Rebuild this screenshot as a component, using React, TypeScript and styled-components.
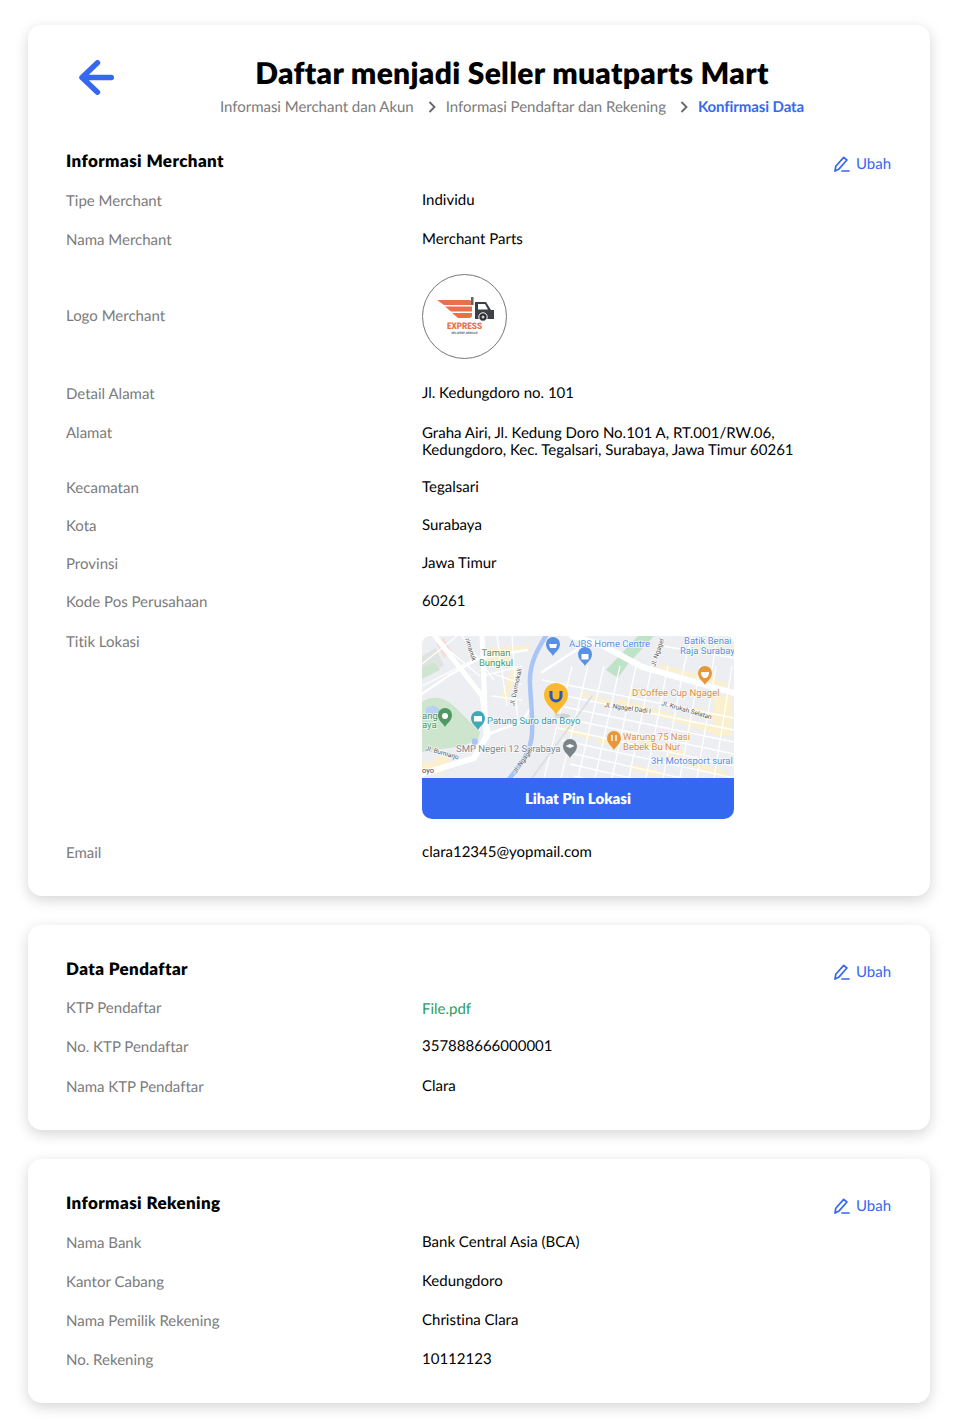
import styled, { createGlobalStyle } from 'styled-components';

const blue = '#3468f0';

const GlobalStyle = createGlobalStyle`
  html, body {
    margin: 0;
    background: #ffffff;
    font-family: "Lato", "Open Sans", sans-serif;
    color: #000000;
    text-rendering: geometricPrecision;
    font-variant-ligatures: none;
  }
`;

const Page = styled.div`
  width: 954px;
  height: 1420px;
  box-sizing: border-box;
  padding: 25px 24px 0 28px;
  display: flex;
  flex-direction: column;
  gap: 29px;
  overflow: hidden;
`;

const Card = styled.section<{ $h: number; $pt: number }>`
  height: ${(p) => p.$h}px;
  box-sizing: border-box;
  padding-top: ${(p) => p.$pt}px;
  background: #fff;
  border-radius: 14px;
  box-shadow: 0 4px 14px rgba(0, 0, 0, 0.17);
`;

const Header = styled.header`
  display: flex;
  padding: 0 20px 0 51px;
  height: 94px;
`;

const BackButton = styled.button`
  width: 35px;
  height: 35px;
  margin-top: 5px;
  padding: 0;
  border: 0;
  background: none;
  flex: none;
`;

const HeaderText = styled.div`
  flex: 1;
  text-align: center;
`;

const Title = styled.h1`
  margin: 0;
  font-size: 30px;
  line-height: 36px;
  font-weight: 800;
  letter-spacing: 0.3px;
`;

const Steps = styled.div`
  margin-top: 6px;
  display: flex;
  justify-content: center;
  align-items: center;
  height: 20px;
  font-size: 15px;
  color: #7b7b7b;
`;

const Step = styled.span<{ $active?: boolean }>`
  color: ${(p) => (p.$active ? blue : '#7b7b7b')};
  font-weight: ${(p) => (p.$active ? 700 : 400)};
  letter-spacing: ${(p) => (p.$active ? '-0.1px' : '-0.02px')};
`;

const StepArrow = styled.svg`
  width: 8px;
  height: 12px;
  margin: 0 10px 0 14px;
`;

const Section = styled.div`
  padding: 0 39px 0 38px;
`;

const SectionHead = styled.div`
  display: flex;
  justify-content: space-between;
  height: 24px;
`;

const SectionTitle = styled.h2`
  margin: 0;
  font-size: 17px;
  line-height: 24px;
  font-weight: 800;
  letter-spacing: 0.4px;
`;

const EditLink = styled.a`
  display: flex;
  align-items: center;
  gap: 6px;
  height: 20px;
  margin-top: 5px;
  color: ${blue};
  font-size: 15px;
`;

const Row = styled.div<{ $mt: number }>`
  display: grid;
  grid-template-columns: 356px 1fr;
  margin-top: ${(p) => p.$mt}px;
  font-size: 15px;
  line-height: 14px;
`;

const Label = styled.div<{ $center?: boolean }>`
  color: #7b7b7b;
  padding-top: 1px;
  padding-bottom: ${(p) => (p.$center ? '2px' : '0')};
  align-self: ${(p) => (p.$center ? 'center' : 'start')};
`;

const Value = styled.div<{ $link?: boolean; $multi?: boolean }>`
  color: ${(p) => (p.$link ? '#2f9a5c' : '#000')};
  padding-top: ${(p) => (p.$link ? '2px' : '0')};
  line-height: ${(p) => (p.$multi ? '17px' : '14px')};
`;

const LogoCircle = styled.div`
  width: 85px;
  height: 85px;
  box-sizing: border-box;
  border: 1px solid #777;
  border-radius: 50%;
  overflow: hidden;
`;

const MapBox = styled.div`
  width: 312px;
  height: 183px;
  margin-top: 2px;
  border-radius: 8px 8px 10px 10px;
  overflow: hidden;
  display: flex;
  flex-direction: column;
`;

const MapButton = styled.button`
  height: 41px;
  flex: none;
  border: 0;
  background: ${blue};
  color: #fff;
  font-family: inherit;
  font-size: 15px;
  font-weight: 800;
  text-rendering: inherit;
  font-variant-ligatures: inherit;
`;

const BackArrow = () => (
  <svg width="35" height="35" viewBox="0 0 35 35" fill="none" stroke={blue} strokeWidth="5.4" strokeLinecap="round" strokeLinejoin="round">
    <path d="M32.300 17.500H3M18.500 2.800L3 17.500 18.500 32.200" />
  </svg>
);

const PencilIcon = () => (
  <svg width="16" height="16" viewBox="0 0 16 16" fill="none" stroke={blue} strokeWidth="1.7" strokeLinecap="round" strokeLinejoin="round">
    <path d="M1 15l.8-4.800L9.700 1.400l3.200 2.600-7.800 8.900L1 15zM8 15h7" />
  </svg>
);

const Chevron = () => (
  <StepArrow viewBox="0 0 8 12" fill="none" stroke="#666" strokeWidth="1.8">
    <path d="M1.500 1L6.500 6l-5 5" />
  </StepArrow>
);

const Edit = () => (
  <EditLink>
    <PencilIcon />
    Ubah
  </EditLink>
);

const LogoMark = () => (
  <svg width="83" height="83" viewBox="0 0 83 83">
    <g fill="#e8704a">
      <path d="M14 25h32c2 0 3 1 3 3v2H21z" />
      <path d="M22 31.500h27v5H28z" />
      <path d="M29 38h20v2c0 2-1 3-3 3H35z" />
    </g>
    <path d="M48 22h2.500v8H48z" fill="#666" />
    <path d="M52 27h11l5 8h3v9H52z" fill="#3d4046" />
    <path d="M55 29h7l3 5.500H55z" fill="#fff" />
    <circle cx="60" cy="42" r="4.200" fill="#2b2c30" stroke="#fff" strokeWidth="1" />
    <circle cx="60" cy="42" r="1.500" fill="#ccc" />
    <text x="41.500" y="54" textAnchor="middle" fontFamily="Roboto, sans-serif" fontSize="9" fontWeight="900" fill="#e8704a" textLength="35" lengthAdjust="spacingAndGlyphs">EXPRESS</text>
    <text x="41.500" y="59" textAnchor="middle" fontFamily="Roboto, sans-serif" fontSize="3" fontWeight="700" fill="#555">DELIVERY SERVICE</text>
  </svg>
);

// street grid of the lower right quarter of the map
const gridLines: string[] = [
  'M75 0L85 70', 'M90 0L96 90', 'M35 0L0 28', 'M0 50L55 22', 'M240 10L312 22',
  'M270 0L262 30', 'M295 0L290 35', 'M100 30L60 40', 'M72 38L100 48', 'M70 60L100 64',
  'M24 12L58 40', 'M40 0L72 44',
];
for (let i = 0; i < 9; i++) {
  gridLines.push(`M${120 + i * 4} ${44 + i * 12}L312 ${82 + i * 12}`);
}
for (let i = 0; i < 11; i++) {
  gridLines.push(`M${150 + i * 16} 30L${122 + i * 17} 142`);
}

const beige = [
  'M196 62l110 33-2 6-110-33z', 'M205 98l60 18-2 5-60-18z', 'M176 100l22 7-2 6-22-7z',
  'M270 70l38 12-2 6-38-12z', 'M238 28l70 20-1 4-70-20z', 'M60 20h14v8H60z', 'M78 62l12-30 6 2-12 30z',
  'M0 126h20v12H0z', 'M85 10h22v5H85z', 'M246 118l60 18-2 5-60-18z', 'M140 90l30 8-2 5-30-8z',
  'M160 56l30 9-1 4-30-9z', 'M292 60h18v40h-18z', 'M210 128l30 8-2 5-30-8z',
];

const Pin = ({ x, y, color, r = 7 }: { x: number; y: number; color: string; r?: number }) => (
  <path
    transform={`translate(${x} ${y}) scale(${r / 7})`}
    d="M0 9C-1.500 5.500-7 3-7-3a7 7 0 0 1 14 0C7 3 1.500 5.500 0 9z"
    fill={color}
  />
);

const MapLabel = styled.text<{ $fill: string; $size?: number }>`
  font-family: "Roboto", sans-serif;
  font-size: ${(p) => p.$size ?? 9.5}px;
  fill: ${(p) => p.$fill};
  paint-order: stroke;
  stroke: rgba(255, 255, 255, 0.75);
  stroke-width: 1.5px;
`;

const MapDrawing = () => (
  <svg width="312" height="142" viewBox="0 0 312 142" style={{ flex: 'none', display: 'block' }}>
    <rect width="312" height="142" fill="#eceef1" />
    <path d="M0 66C12 58 24 62 34 72L58 96 56 104 40 110 0 116z" fill="#cde5cd" />
    <path d="M4 72c6-4 12-2 14 3-4 6-8 8-14 6z" fill="#b9d2f4" />
    <path d="M0 20L14 12 22 30 0 40z" fill="#dfe4e0" />
    <path d="M14 8l8-6 8 14-8 6z" fill="#f7dcd8" />
    <path d="M0 32l12-6 6 8-18 9z" fill="#cfe5cf" />
    <path d="M216 0h16l-26 28-10 14-12-8z" fill="#bfe3c8" />
    <path d="M60 12h26l2 14H62z" fill="#fbf0cd" />
    <path d="M12 122l14-2 4 12-18 6z" fill="#fbf0cd" />
    {beige.map((d) => (
      <path key={d} d={d} fill="#fbf0cd" />
    ))}
    <g fill="none" stroke="#fff" strokeWidth="1.300">
      {gridLines.map((d) => (
        <path key={d} d={d} />
      ))}
    </g>
    <g fill="none" stroke="#fff" strokeLinecap="round">
      <path d="M13 0L60 60 66 98" strokeWidth="5" />
      <path d="M60 0L64 98" strokeWidth="5" />
      <path d="M0 58L26 40 58 22 105 14" strokeWidth="2.500" />
      <path d="M66 98L52 122 0 138" strokeWidth="6" />
      <path d="M66 98L100 86 110 70" strokeWidth="2.500" />
      <path d="M150 0L180 9 220 31 312 57" strokeWidth="6" />
      <path d="M120 36L170 4" strokeWidth="2.500" />
      <path d="M110 142L170 60" strokeWidth="2" stroke="#dcdfe4" />
    </g>
    <path d="M125-2C115 14 107 28 108 48c1 20 3 36 2 50-1 16-10 30-24 46" fill="none" stroke="#a8c5f6" strokeWidth="4.500" />
    <path d="M50 103c4-2 6 0 6 3 0 3-4 4-6 2z" fill="#a8c5f6" />
    <MapLabel x="74" y="20" textAnchor="middle" $fill="#4f9a63">Taman</MapLabel>
    <MapLabel x="74" y="30" textAnchor="middle" $fill="#4f9a63">Bungkul</MapLabel>
    <MapLabel x="147" y="11" $fill="#5a8fe6">AJBS Home Centre</MapLabel>
    <MapLabel x="262" y="8" $fill="#5a8fe6">Batik Benai</MapLabel>
    <MapLabel x="258" y="18" $fill="#5a8fe6">Raja Surabay</MapLabel>
    <MapLabel x="210" y="60" $fill="#d98f3e">D'Coffee Cup Ngagel</MapLabel>
    <MapLabel x="65" y="88" $fill="#3b9aa6">Patung Suro dan Boyo</MapLabel>
    <MapLabel x="34" y="116" $fill="#80868b">SMP Negeri 12 Surabaya</MapLabel>
    <MapLabel x="201" y="104" $fill="#d98f3e">Warung 75 Nasi</MapLabel>
    <MapLabel x="201" y="114" $fill="#d98f3e">Bebek Bu Nur</MapLabel>
    <MapLabel x="229" y="128" $fill="#5a8fe6">3H Motosport sural</MapLabel>
    <MapLabel x="0" y="83" $fill="#4f9a63">ang</MapLabel>
    <MapLabel x="0" y="92" $fill="#4f9a63">aya</MapLabel>
    <MapLabel x="0" y="137" $size={7.5} $fill="#444">oyo</MapLabel>
    <MapLabel transform="translate(92 70) rotate(-78)" $size={6.5} $fill="#555">Jl. Darmokali</MapLabel>
    <MapLabel transform="translate(182 71) rotate(8)" $size={6.5} $fill="#555">Jl. Ngagel Dadi I</MapLabel>
    <MapLabel transform="translate(239 69) rotate(16)" $size={6.5} $fill="#555">Jl. Krukah Selatan</MapLabel>
    <MapLabel transform="translate(3 114) rotate(16)" $size={6.5} $fill="#555">Jl. Bumiarjo</MapLabel>
    <MapLabel transform="translate(233 31) rotate(-72)" $size={6.5} $fill="#555">Jl. Ngagel</MapLabel>
    <MapLabel transform="translate(43 3) rotate(72)" $size={6.5} $fill="#555">rimanuk</MapLabel>
    <MapLabel transform="translate(94 138) rotate(-55)" $size={6.5} $fill="#555">Jl. Ngagel</MapLabel>

    <Pin x={131} y={11} color="#5a8fe6" />
    <path d="M127 8h8l-1 4h-6z" fill="#fff" />
    <Pin x={163} y={21} color="#5a8fe6" />
    <path d="M159.500 18h7v5.500h-7z" fill="#fff" />
    <Pin x={283} y={40} color="#e8973a" />
    <path d="M279 36h8c0 4-2 6-4 6s-4-2-4-6z" fill="#fff" />
    <Pin x={56} y={85} color="#3fa9b8" />
    <path d="M52 80h8v5.500h-8z" fill="#fff" />
    <Pin x={23} y={82} color="#4f9a63" />
    <circle cx="23" cy="80" r="3" fill="#fff" />
    <Pin x={148} y={113} color="#7b838a" />
    <path d="M143.500 110l4.500-2 4.500 2-4.500 2z" fill="#fff" />
    <Pin x={192} y={105} color="#e8973a" />
    <path d="M190 99v6M194 99v6" stroke="#fff" strokeWidth="1.400" />
    <g>
      <ellipse cx="140" cy="80" rx="8" ry="2.500" fill="rgba(0,0,0,0.12)" />
      <path d="M134 79c-2-6-12-11-12-20a12 12 0 0 1 24 0c0 9-10 14-12 20z" fill="#fbb92e" />
      <path d="M129 55v5a5 5 0 0 0 10 0v-5" fill="none" stroke="#2b55c8" strokeWidth="3" />
    </g>
  </svg>
);

export default function App() {
  return (
    <Page>
      <GlobalStyle />
      <Card $h={871} $pt={30}>
        <Header>
          <BackButton aria-label="Kembali">
            <BackArrow />
          </BackButton>
          <HeaderText>
            <Title>Daftar menjadi Seller muatparts Mart</Title>
            <Steps>
              <Step>Informasi Merchant dan Akun</Step>
              <Chevron />
              <Step>Informasi Pendaftar dan Rekening</Step>
              <Chevron />
              <Step $active>Konfirmasi Data</Step>
            </Steps>
          </HeaderText>
        </Header>
        <Section>
          <SectionHead>
            <SectionTitle>Informasi Merchant</SectionTitle>
            <Edit />
          </SectionHead>
          <Row $mt={20}>
            <Label>Tipe Merchant</Label>
            <Value>Individu</Value>
          </Row>
          <Row $mt={24}>
            <Label>Nama Merchant</Label>
            <Value>Merchant Parts</Value>
          </Row>
          <Row $mt={27}>
            <Label $center>Logo Merchant</Label>
            <LogoCircle>
              <LogoMark />
            </LogoCircle>
          </Row>
          <Row $mt={27}>
            <Label>Detail Alamat</Label>
            <Value>Jl. Kedungdoro no. 101</Value>
          </Row>
          <Row $mt={24}>
            <Label>Alamat</Label>
            <Value $multi>
              Graha Airi, Jl. Kedung Doro No.101 A, RT.001/RW.06,
              <br />
              Kedungdoro, Kec. Tegalsari, Surabaya, Jawa Timur 60261
            </Value>
          </Row>
          <Row $mt={21}>
            <Label>Kecamatan</Label>
            <Value>Tegalsari</Value>
          </Row>
          <Row $mt={23}>
            <Label>Kota</Label>
            <Value>Surabaya</Value>
          </Row>
          <Row $mt={23}>
            <Label>Provinsi</Label>
            <Value>Jawa Timur</Value>
          </Row>
          <Row $mt={23}>
            <Label>Kode Pos Perusahaan</Label>
            <Value>60261</Value>
          </Row>
          <Row $mt={25}>
            <Label>Titik Lokasi</Label>
            <MapBox>
              <MapDrawing />
              <MapButton>Lihat Pin Lokasi</MapButton>
            </MapBox>
          </Row>
          <Row $mt={26}>
            <Label>Email</Label>
            <Value>clara12345@yopmail.com</Value>
          </Row>
        </Section>
      </Card>
      <Card $h={205} $pt={32}>
        <Section>
          <SectionHead>
            <SectionTitle>Data Pendaftar</SectionTitle>
            <Edit />
          </SectionHead>
          <Row $mt={19}>
            <Label>KTP Pendaftar</Label>
            <Value $link>File.pdf</Value>
          </Row>
          <Row $mt={23}>
            <Label>No. KTP Pendaftar</Label>
            <Value>357888666000001</Value>
          </Row>
          <Row $mt={25}>
            <Label>Nama KTP Pendaftar</Label>
            <Value>Clara</Value>
          </Row>
        </Section>
      </Card>
      <Card $h={244} $pt={32}>
        <Section>
          <SectionHead>
            <SectionTitle>Informasi Rekening</SectionTitle>
            <Edit />
          </SectionHead>
          <Row $mt={20}>
            <Label>Nama Bank</Label>
            <Value>Bank Central Asia (BCA)</Value>
          </Row>
          <Row $mt={24}>
            <Label>Kantor Cabang</Label>
            <Value>Kedungdoro</Value>
          </Row>
          <Row $mt={24}>
            <Label>Nama Pemilik Rekening</Label>
            <Value>Christina Clara</Value>
          </Row>
          <Row $mt={24}>
            <Label>No. Rekening</Label>
            <Value>10112123</Value>
          </Row>
        </Section>
      </Card>
    </Page>
  );
}
